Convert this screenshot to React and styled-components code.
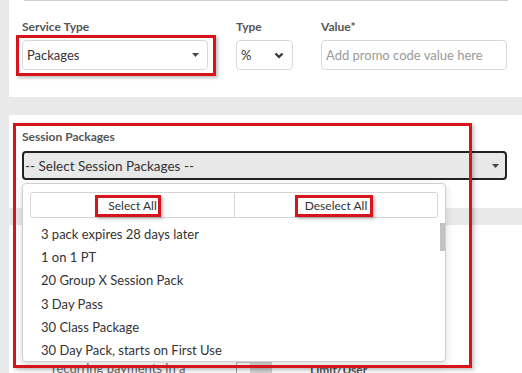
import React from "react";
import styled, { createGlobalStyle } from "styled-components";

const GlobalStyle = createGlobalStyle`
  body {
    margin: 0;
    background: #e9e9e9;
    font-family: Lato, "Noto Sans", sans-serif;
    color: #333;
  }
`;

const Page = styled.div`
  width: 522px;
  height: 373px;
  overflow: hidden;
  padding-left: 9px;
  box-sizing: border-box;
  display: flex;
  flex-direction: column;
`;

const Card = styled.div`
  position: relative;
  flex-shrink: 0;
  background: #fff;
  height: ${(p) => p.$height || "auto"};
  margin-bottom: ${(p) => p.$gap || "0px"};
  padding: ${(p) => p.$pad || "0"};
  box-sizing: border-box;
`;

const TopLine = styled.div`
  height: 1px;
  background: #cfcfcf;
  margin: 0 14px 0 15px;
`;

const FieldRow = styled.div`
  display: flex;
  gap: 28px;
  padding: 18px 13px 0 13px;
`;

const Field = styled.div`
  display: flex;
  flex-direction: column;
  width: ${(p) => p.$width};
`;

const Label = styled.div`
  font-size: 12px;
  font-weight: 700;
  line-height: 16px;
  color: #555;
  margin-top: ${(p) => p.$mt || "0px"};
  margin-bottom: ${(p) => p.$mb || "5px"};
`;

const Highlight = styled.div`
  position: relative;
  &::after {
    content: "";
    position: absolute;
    inset: ${(p) => p.$inset};
    border: 3px solid #d7141c;
    box-shadow: 2px 2px 3px rgba(0, 0, 0, 0.25);
    pointer-events: none;
  }
`;

const SelectBox = styled.div`
  height: 30px;
  box-sizing: border-box;
  border: 1px solid #d9d9d9;
  border-radius: 4px;
  display: flex;
  align-items: center;
  justify-content: space-between;
  padding: 0 8px 0 4px;
  font-size: 13px;
  color: ${(p) => (p.$placeholder ? "#9a9a9a" : "#333")};
  background: #fff;
`;

const SessionSelect = styled.div`
  height: 29px;
  width: 485px;
  box-sizing: border-box;
  border: 2px solid #222;
  border-radius: 4px;
  background: #e8e8e8;
  display: flex;
  align-items: center;
  justify-content: space-between;
  padding: 0 6px 0 1px;
  font-size: 13.5px;
  color: #333;
`;

const Annotation = styled.div`
  position: absolute;
  top: 8px;
  left: 4px;
  width: 459px;
  height: 245px;
  box-sizing: border-box;
  border: 3px solid #d7141c;
  box-shadow: 2px 2px 4px rgba(0, 0, 0, 0.25);
  z-index: 20;
  pointer-events: none;
`;

const Dropdown = styled.div`
  position: absolute;
  top: 68px;
  left: 13px;
  width: 424px;
  height: 179px;
  box-sizing: border-box;
  background: #fff;
  border: 1px solid #cfcfcf;
  border-radius: 4px;
  box-shadow: 0 3px 8px rgba(0, 0, 0, 0.15);
  z-index: 10;
  display: flex;
  flex-direction: column;
  padding-top: 8px;
  overflow: hidden;
`;

const ButtonGroup = styled.div`
  margin: 0 7px;
  height: 26px;
  flex-shrink: 0;
  box-sizing: border-box;
  border: 1px solid #d4d4d4;
  border-radius: 3px;
  display: grid;
  grid-template-columns: 1fr 1fr;
`;

const GroupButton = styled.div`
  display: flex;
  align-items: center;
  justify-content: center;
  font-size: 12px;
  color: #333;
  & + & {
    border-left: 1px solid #d4d4d4;
  }
`;

const ListArea = styled.div`
  position: relative;
  flex: 1;
  margin-top: 5px;
  overflow: hidden;
`;

const List = styled.ul`
  list-style: none;
  margin: 0;
  padding: 0;
`;

const ScrollThumb = styled.div`
  position: absolute;
  top: 0;
  right: 0;
  width: 5px;
  height: 28px;
  background: #c2c2c2;
`;

const Item = styled.li`
  height: 23.2px;
  line-height: 23.2px;
  padding-left: 18px;
  font-size: 13px;
  color: #333;
  white-space: nowrap;
`;

const OptionRow = styled.div`
  display: grid;
  grid-template-columns: 30px 184px 74px 1fr;
  align-items: start;
  margin-top: ${(p) => p.$mt || "0px"};
`;

const Radio = styled.span`
  width: 13px;
  height: 13px;
  border-radius: 50%;
  box-sizing: border-box;
  border: ${(p) => (p.$on ? "4px solid #1a73c9" : "1px solid #999")};
  margin-top: 2px;
`;

const OptionText = styled.div`
  font-size: 13px;
  line-height: 17px;
  color: #666;
`;

const SmallInput = styled.div`
  margin-top: 19px;
  width: 36px;
  height: 28px;
  box-sizing: border-box;
  border: 1px solid #ccc;
  border-left-color: #999;
  display: flex;
  justify-content: flex-end;
  &::after {
    content: "";
    width: 21px;
    background: #d4d4d4;
  }
`;

const Caret = () => (
  <svg width="7" height="4" viewBox="0 0 7 4">
    <path d="M0 0h7L3.5 4z" fill="#444" />
  </svg>
);

const Chevron = () => (
  <svg width="10" height="7" viewBox="0 0 10 7">
    <path d="M1.5 1.5l3.5 3.5 3.5-3.5" fill="none" stroke="#333" strokeWidth="2.2" />
  </svg>
);

const packages = [
  "3 pack expires 28 days later",
  "1 on 1 PT",
  "20 Group X Session Pack",
  "3 Day Pass",
  "30 Class Package",
  "30 Day Pack, starts on First Use",
  "30 Day Unlimited",
  "5 Class Pack",
  "5 PT Sessions",
  "10 Class Pack",
  "10 PT Sessions",
  "Annual Pass",
  "Bootcamp 8 Week",
  "Drop In Class",
  "Family Pack",
  "Intro Offer 2 Weeks",
  "Kids Swim 10 Pack",
  "Monthly Unlimited",
  "Nutrition Consult",
  "Open Gym 20 Visits",
  "Pilates 10 Pack",
  "Private Yoga 5 Pack",
  "Semi-Private PT 8 Pack",
  "Spin 12 Class Pack",
  "Student 10 Visit",
  "Trial Week Pass",
  "Weekend Pass",
  "Yoga 20 Class Pack",
  "Youth Sports Camp",
  "Zumba Punch Card",
];

const App = () => {
  return (
    <>
      <GlobalStyle />
      <Page>
        <Card $height="97px" $gap="18px">
          <TopLine />
          <FieldRow>
            <Field $width="186px">
              <Label>Service Type</Label>
              <Highlight $inset="-5px -8px -6px -6px">
                <SelectBox>
                  Packages
                  <Caret />
                </SelectBox>
              </Highlight>
            </Field>
            <Field $width="57px">
              <Label>Type</Label>
              <SelectBox>
                %
                <Chevron />
              </SelectBox>
            </Field>
            <Field $width="186px">
              <Label>Value*</Label>
              <SelectBox $placeholder>Add promo code value here</SelectBox>
            </Field>
          </FieldRow>
        </Card>

        <Card $height="93px" $gap="17px" $pad="14px 15px 0 13px">
          <Label $mb="6px">Session Packages</Label>
          <SessionSelect>
            -- Select Session Packages --
            <Caret />
          </SessionSelect>
          <Dropdown>
            <ButtonGroup>
              <GroupButton>
                <Highlight $inset="-3px -4px -4px -13px">Select All</Highlight>
              </GroupButton>
              <GroupButton>
                <Highlight $inset="-3px -6px -4px -10px">Deselect All</Highlight>
              </GroupButton>
            </ButtonGroup>
            <ListArea>
              <List>
                {packages.map((name) => (
                  <Item key={name}>{name}</Item>
                ))}
              </List>
              <ScrollThumb />
            </ListArea>
          </Dropdown>
          <Annotation />
        </Card>

        <Card $height="200px" $pad="18px 15px 0 13px">
          <Label>Applies To</Label>
          <OptionRow $mt="8px">
            <Radio />
            <OptionText>
              Apply discount to the first
              <br />
              payment only
            </OptionText>
          </OptionRow>
          <OptionRow $mt="42px">
            <Radio $on />
            <OptionText>
              Apply discount to all
              <br />
              recurring payments in a
              <br />
              membership
            </OptionText>
            <SmallInput />
            <Label $mt="19px">Limit/User</Label>
          </OptionRow>
        </Card>
      </Page>
    </>
  );
};

export default App;
